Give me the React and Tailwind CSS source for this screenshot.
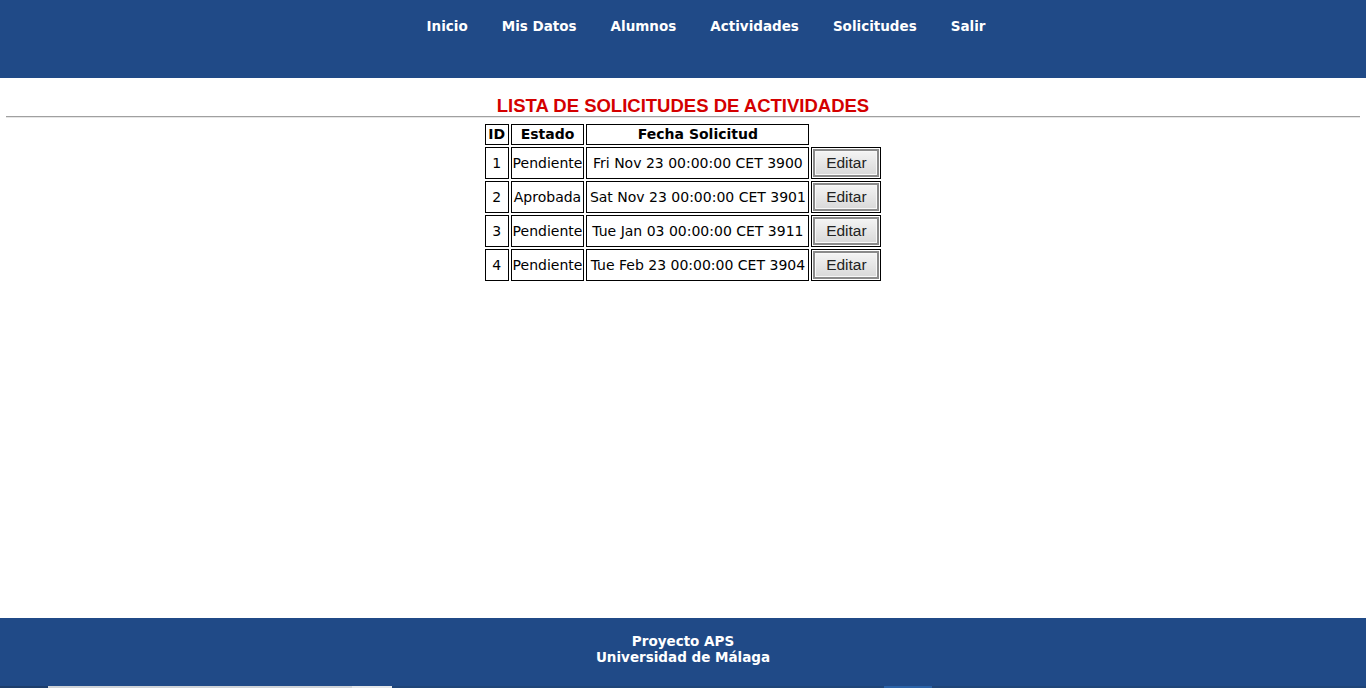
import React from "react";

const NAV = ["Inicio", "Mis Datos", "Alumnos", "Actividades", "Solicitudes", "Salir"];

const SOLICITUDES = [
  { id: 1, estado: "Pendiente", fecha: "Fri Nov 23 00:00:00 CET 3900" },
  { id: 2, estado: "Aprobada", fecha: "Sat Nov 23 00:00:00 CET 3901" },
  { id: 3, estado: "Pendiente", fecha: "Tue Jan 03 00:00:00 CET 3911" },
  { id: 4, estado: "Pendiente", fecha: "Tue Feb 23 00:00:00 CET 3904" },
];

const tahoma = { fontFamily: "'DejaVu Sans', Verdana, sans-serif" };

export default function App() {
  return (
    <div className="min-h-[688px] h-screen flex flex-col bg-white text-black" style={tahoma}>
      {/* Cabecera */}
      <header className="h-[78px] shrink-0 bg-[#204a87]">
        <nav className="flex justify-center pl-[46px] pt-[17px] gap-[34px]">
          {NAV.map((item) => (
            <a key={item} href="#" className="text-white font-bold text-[13.5px] leading-[18px]">
              {item}
            </a>
          ))}
        </nav>
      </header>

      {/* Contenido */}
      <main className="flex-1 pt-[17px]">
        <h2
          className="text-center text-[#d40000] font-bold text-[18.5px] leading-[21px]"
          style={{ fontFamily: "'Liberation Sans', Arial, sans-serif" }}
        >
          LISTA DE SOLICITUDES DE ACTIVIDADES
        </h2>
        <div className="mx-[6px] border-t border-t-[#a0a0a0] border-b border-b-[#e6e6e6]" />
        <div className="flex justify-center mt-[4px]">
          <table className="border-separate border-spacing-[2px] text-[14px]">
            <thead>
              <tr>
                <th className="border border-black w-[24px] px-[1px] py-[1px] leading-[17px]">ID</th>
                <th className="border border-black w-[73px] px-[1px] py-[1px] leading-[17px]">Estado</th>
                <th className="border border-black w-[223px] px-[1px] py-[1px] leading-[17px]">Fecha Solicitud</th>
              </tr>
            </thead>
            <tbody>
              {SOLICITUDES.map((s) => (
                <tr key={s.id}>
                  <td className="border border-black text-center px-[1px]">{s.id}</td>
                  <td className="border border-black text-center px-[1px] whitespace-nowrap">{s.estado}</td>
                  <td className="border border-black text-center px-[1px] whitespace-nowrap">{s.fecha}</td>
                  <td className="border border-black p-[1px] w-[70px]">
                    <button
                      className="block w-[66px] h-[28px] border-2 border-[#8a8a8a] bg-gradient-to-b from-[#f4f4f4] to-[#d9d9d9] text-[15.5px] leading-[20px] text-[#222] shadow-[inset_0_0_0_1px_#f8f8f8]"
                      style={{ fontFamily: "'Liberation Sans', Arial, sans-serif" }}
                    >
                      Editar
                    </button>
                  </td>
                </tr>
              ))}
            </tbody>
          </table>
        </div>
      </main>

      {/* Pie */}
      <footer className="h-[70px] shrink-0 bg-[#204a87] flex flex-col">
        <div className="flex-1 pt-[15px] text-center text-white font-bold text-[13.5px] leading-[16px]">
          <div>Proyecto APS</div>
          <div>Universidad de Málaga</div>
        </div>
        <div className="h-[2px] flex">
          <div className="w-[48px] bg-[#1d3e6c]" />
          <div className="w-[304px] bg-[#cfd3d8]" />
          <div className="w-[40px] bg-[#e4e7ea]" />
          <div className="w-[492px] bg-[#1f4578]" />
          <div className="w-[48px] bg-[#2b62a6]" />
          <div className="flex-1 bg-[#1f4578]" />
        </div>
      </footer>
    </div>
  );
}
